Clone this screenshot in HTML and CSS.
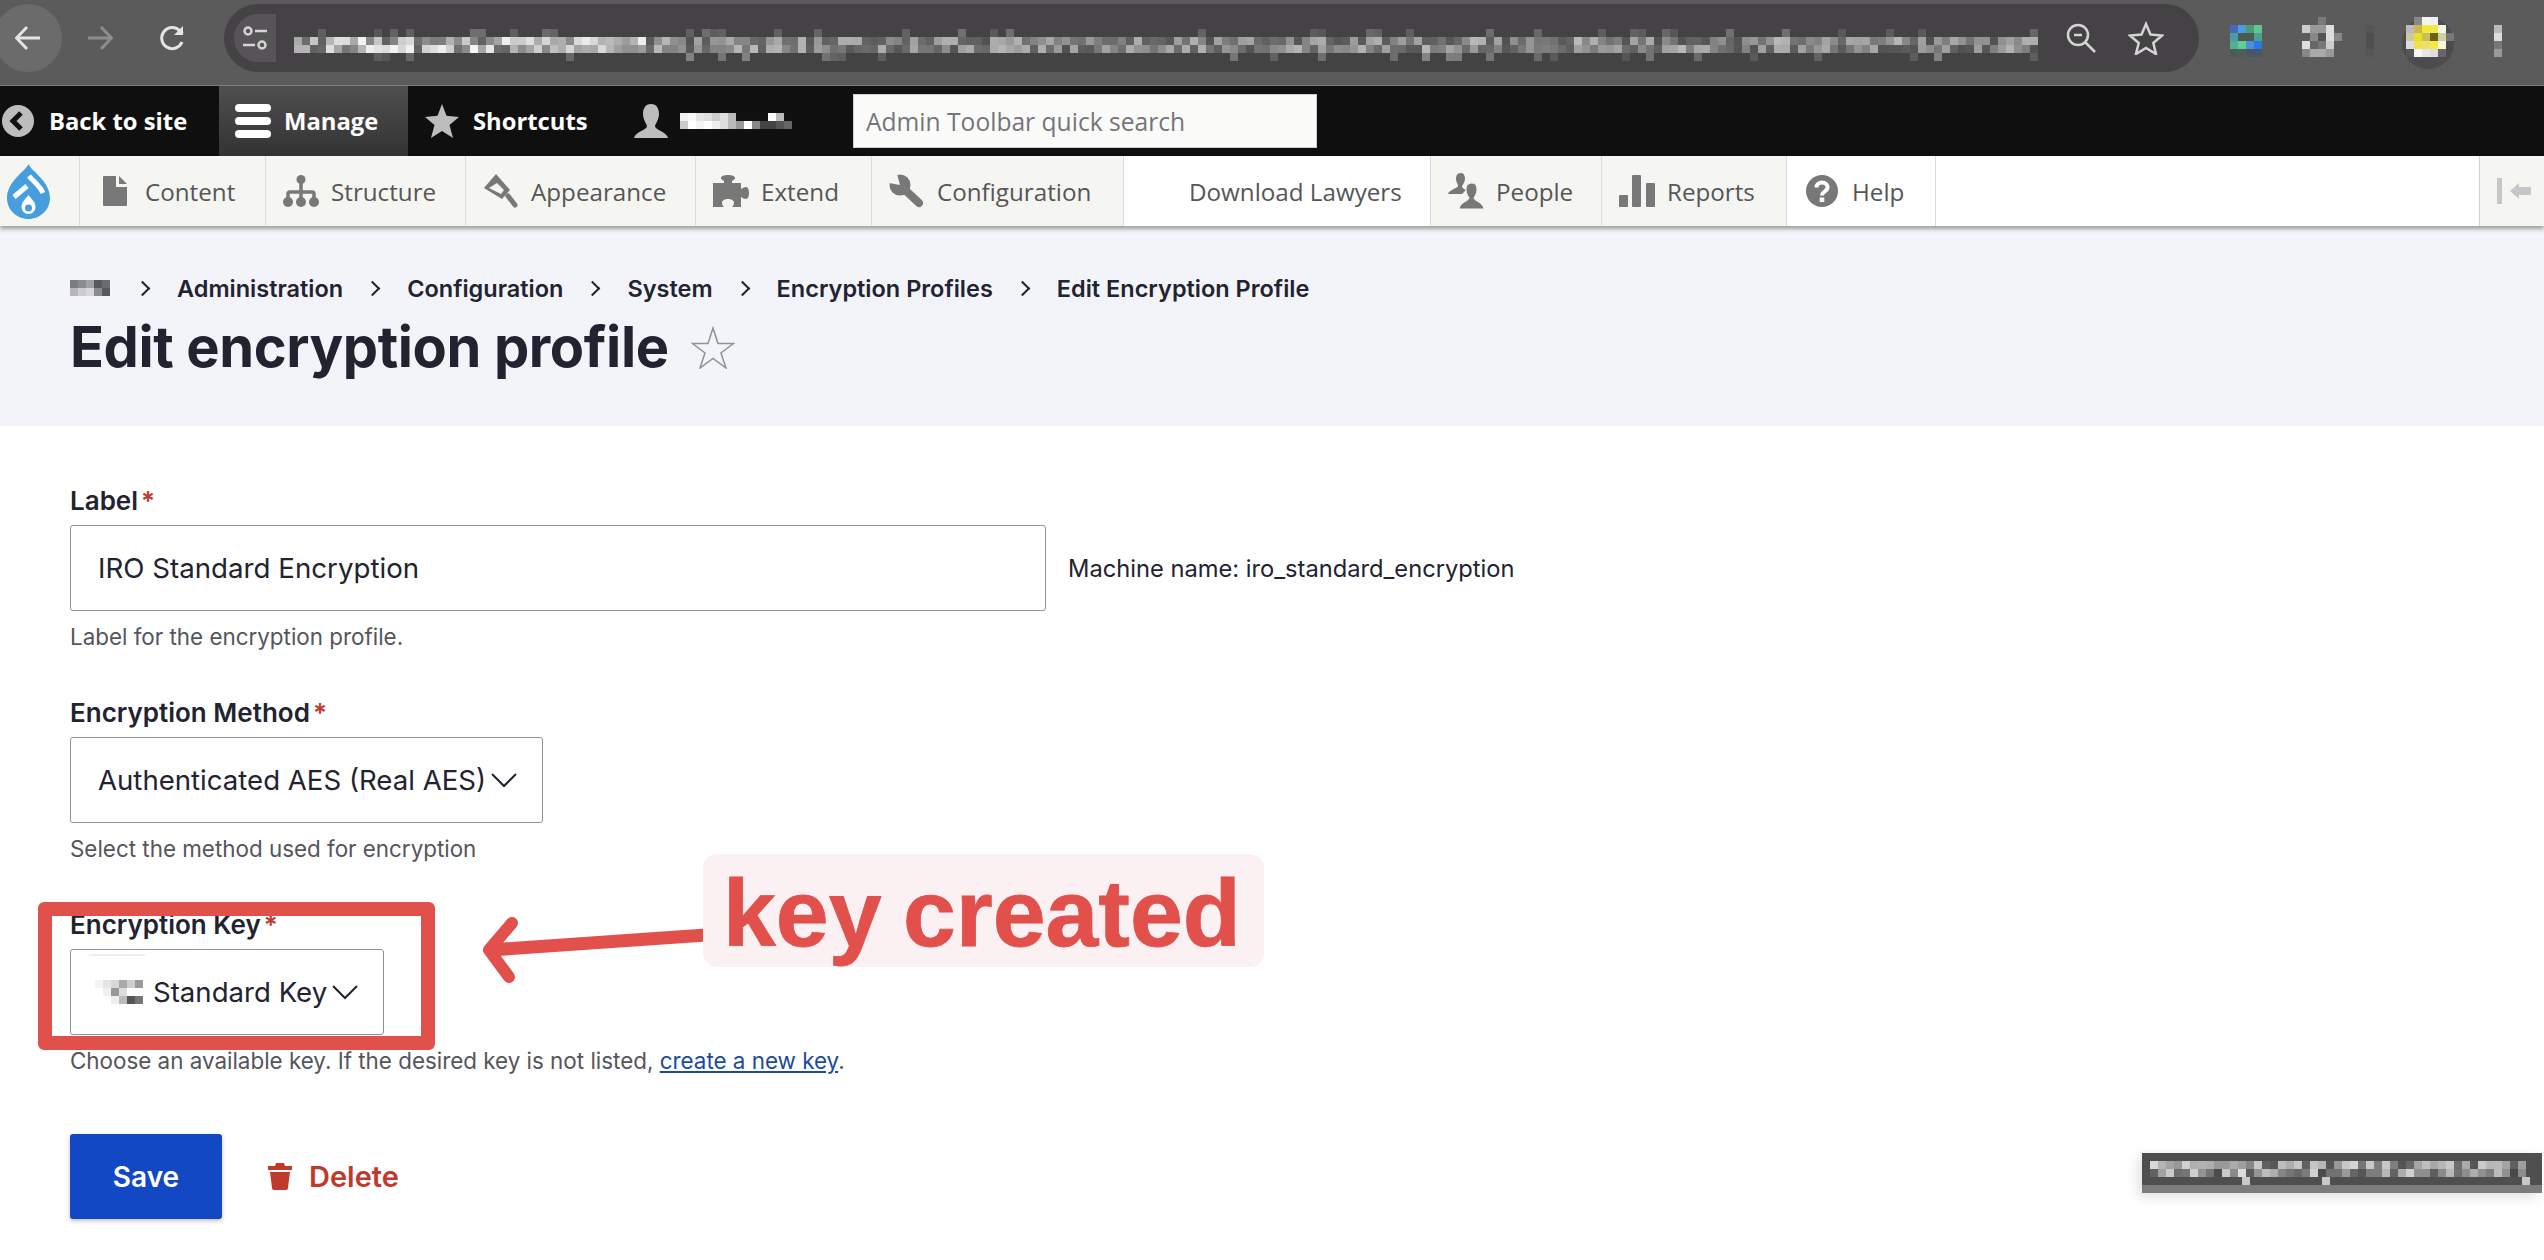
FILE: index.html
```html
<!DOCTYPE html>
<html lang="en">
<head>
  <meta charset="UTF-8" />
  <title>Edit encryption profile</title>
  <link rel="stylesheet" href="styles.css">
</head>
<body>
  <div class="browser">
    <div class="nav-btns">
      <span class="back-circle">
        <svg width="26" height="26" viewBox="0 0 26 26"><path d="M25 13H2M12 2 1.500 13 12 24" class="line"/></svg>
      </span>
      <svg class="fwd" width="26" height="26" viewBox="0 0 26 26"><path d="M1 13h23M14 2l10.500 11L14 24" class="line dim"/></svg>
      <svg class="reload" width="26" height="28" viewBox="0 0 26 28"><path d="M23 18a10.500 10.500 0 1 1-2-11l2.500 3" class="line"/><path d="M24 2v9h-9z" class="solid"/></svg>
    </div>
    <div class="omnibox">
      <span class="site-chip">
        <svg width="26" height="26" viewBox="0 0 26 26"><circle cx="6" cy="6" r="3.500" class="line thin"/><path d="M13 6h12M1 20h12" class="line thin"/><circle cx="20" cy="20" r="3.500" class="line thin"/></svg>
      </span>
      <canvas id="urlMosaic" class="url-mosaic" width="1744" height="32"></canvas>
      <svg class="zoom-icon" width="30" height="30" viewBox="0 0 30 30"><circle cx="12" cy="12" r="10" class="line thin"/><path d="M8 12h8M19 19l10 10" class="line thin"/></svg>
      <svg class="bookmark" width="36" height="34" viewBox="0 0 36 34"><path d="M18 3l4.500 10.500 11.500 1-8.700 7.500 2.700 11-10-6-10 6 2.700-11L2 14.500l11.500-1z" class="line thin"/></svg>
    </div>
    <svg class="ext-icons" width="345" height="85" viewBox="2199 0 345 85">
      <circle cx="2428" cy="43" r="26" fill="#4d4b4d"/>
      <g id="extCells"></g>
    </svg>
  </div>

  <div class="admin-bar">
    <a class="bar-item back-site">
      <svg width="32" height="32" viewBox="0 0 32 32"><circle cx="16" cy="16" r="16" fill="#bdbdbd"/><path d="M19 8l-8 8 8 8" fill="none" stroke="#111" stroke-width="5"/></svg>
      Back to site
    </a>
    <a class="bar-item manage">
      <svg width="36" height="34" viewBox="0 0 36 34"><rect width="36" height="8" rx="4" fill="#fff"/><rect y="13" width="36" height="8" rx="4" fill="#fff"/><rect y="26" width="36" height="8" rx="4" fill="#fff"/></svg>
      Manage
    </a>
    <a class="bar-item shortcuts">
      <svg width="34" height="34" viewBox="0 0 34 34"><path d="M17 0l4.500 11.800L34 13l-9.500 8L28 34l-11-7-11 7 3.500-13L0 13l12.500-1.200z" fill="#bdbdbd"/></svg>
      Shortcuts
    </a>
    <a class="bar-item user">
      <svg width="34" height="34" viewBox="0 0 34 34"><path d="M17 0c-6 0-8 5-8 10 0 5 3 9 4 12 0 4-12 6-13 12h34c-1-6-13-8-13-12 1-3 4-7 4-12 0-5-2-10-8-10z" fill="#bdbdbd"/></svg>
      <svg width="112" height="16" viewBox="0 0 14 2" shape-rendering="crispEdges"><g id="userCells"></g></svg>
    </a>
    <input class="quick-search" type="text" placeholder="Admin Toolbar quick search" />
  </div>

  <div class="tray">
    <a class="tab logo">
      <svg width="43" height="55" viewBox="0 0 43 55">
        <path d="M21.500 0C24 7 43 17 43 34c0 12-10 21-21.500 21S0 46 0 34C0 17 19 7 21.500 0z" fill="#479ede"/>
        <path d="M7 33l13-11M22 12c4 5 10 9 14 17" fill="none" stroke="#fff" stroke-width="5"/>
        <path d="M21.500 31c3 4 7 7 7 12a7 7 0 0 1-14 0c0-5 4-8 7-12z" fill="#fff"/>
        <circle cx="21.500" cy="44" r="3.500" fill="#479ede"/>
      </svg>
    </a>
    <a class="tab">
      <span class="tab-icon"><svg width="24" height="30" viewBox="0 0 24 30"><path d="M1 0h12v11h11v18a1 1 0 0 1-1 1H1a1 1 0 0 1-1-1V1a1 1 0 0 1 1-1zM16 0l8 8h-8z"/></svg></span>
      Content
    </a>
    <a class="tab">
      <span class="tab-icon"><svg width="36" height="32" viewBox="0 0 36 32"><circle cx="18" cy="4.500" r="4.500"/><circle cx="5" cy="27" r="5"/><circle cx="18" cy="27" r="5"/><circle cx="31" cy="27" r="5"/><path d="M18 4v23M5 27v-8a2 2 0 0 1 2-2h22a2 2 0 0 1 2 2v8" fill="none" stroke="#787878" stroke-width="3.500"/></svg></span>
      Structure
    </a>
    <a class="tab">
      <span class="tab-icon"><svg width="34" height="34" viewBox="0 0 34 34"><path fill-rule="evenodd" d="M12 0L0 14l18 11 8-9zM5 14l8-5 7 7-3 4z"/><path d="M24 22l7 9" fill="none" stroke="#787878" stroke-width="5" stroke-linecap="round"/></svg></span>
      Appearance
    </a>
    <a class="tab">
      <span class="tab-icon"><svg width="36" height="32" viewBox="0 0 36 32"><path d="M0 8h11V6C9 5 8 4 8 3c0-2 3-3 7-3s7 1 7 3c0 1-1 2-3 3v2h9v6c2-1 3-2 5-2 2 0 3 3 3 6s-1 6-3 6c-2 0-3-1-5-2v10h-9c1-1 2-2 2-4 0-3-3-4-6-4s-6 1-6 4c0 2 1 3 2 4H0z"/></svg></span>
      Extend
    </a>
    <a class="tab">
      <span class="tab-icon"><svg width="36" height="34" viewBox="0 0 36 34"><circle cx="11" cy="11" r="10.500"/><path d="M14 14l16 15" fill="none" stroke="#787878" stroke-width="8" stroke-linecap="round"/><path d="M11 11L0 9V0h8z" fill="#f5f5f2"/></svg></span>
      Configuration
    </a>
    <a class="tab plain">
      <span class="tab-icon"></span>
      Download Lawyers
    </a>
    <a class="tab">
      <span class="tab-icon"><svg width="36" height="36" viewBox="0 0 36 36"><path d="M13 0C9 0 8 3 8 6c0 3 2 5 2 7 0 2-9 4-10 8h14l4-4c-2-1-4-2-4-4 1-2 3-4 3-7 0-3-1-6-4-6z"/><path d="M24 10c-5 0-6 4-6 7 0 3 2 6 3 8 0 3-9 4-10 11h25c-1-7-10-8-10-11 1-2 3-5 3-8 0-3-1-7-5-7z" stroke="#f5f5f2" stroke-width="1"/></svg></span>
      People
    </a>
    <a class="tab">
      <span class="tab-icon"><svg width="36" height="32" viewBox="0 0 36 32"><rect y="20" width="9" height="12" rx="1"/><rect x="13" width="9" height="32" rx="1"/><rect x="27" y="8" width="9" height="24" rx="1"/></svg></span>
      Reports
    </a>
    <a class="tab plain">
      <span class="tab-icon"><svg width="32" height="32" viewBox="0 0 32 32"><circle cx="16" cy="16" r="16"/><path d="M10.500 12.500c0-3 2.500-5 5.500-5s5.500 2 5.500 5c0 4-5.500 4-5.500 8" fill="none" stroke="#fff" stroke-width="4"/><rect x="13.700" y="22.500" width="4.600" height="4.600" fill="#fff"/></svg></span>
      Help
    </a>
    <span class="tray-fill"></span>
    <a class="tab collapse">
      <svg width="34" height="26" viewBox="0 0 34 26"><rect width="5" height="26" fill="#c6c6c6"/><path d="M13 13l9-8v4h12v8H22v4z" fill="#c6c6c6"/></svg>
    </a>
  </div>

  <header class="page-header">
    <ol class="crumbs">
      <li class="crumb-home"><svg width="40" height="16" viewBox="0 0 5 2" shape-rendering="crispEdges"><g id="crumbCells"></g></svg></li>
      <li>Administration</li>
      <li>Configuration</li>
      <li>System</li>
      <li>Encryption Profiles</li>
      <li>Edit Encryption Profile</li>
    </ol>
    <div class="title-row">
      <h1>Edit encryption profile</h1>
      <svg width="44" height="43" viewBox="0 0 44 43"><path d="M22 2l5 15.500h15.500L30 27l5 15-13-9.500L9 42l5-15L1.500 17.500H17z" fill="none" stroke="#8e929c" stroke-width="1.500"/></svg>
    </div>
  </header>

  <form class="edit-form">
    <div class="field">
      <label>Label<span class="req">*</span></label>
      <div class="input-row">
        <input class="text-input" type="text" value="IRO Standard Encryption" />
        <span class="machine">Machine name: iro_standard_encryption</span>
      </div>
      <p class="help">Label for the encryption profile.</p>
    </div>

    <div class="field">
      <label>Encryption Method<span class="req">*</span></label>
      <div class="select method">
        Authenticated AES (Real AES)
        <svg width="26" height="16" viewBox="0 0 26 16"><path d="M1 2l12 12L25 2" fill="none" stroke="#222330" stroke-width="2"/></svg>
      </div>
      <p class="help">Select the method used for encryption</p>
    </div>

    <div class="field">
      <label>Encryption Key<span class="req">*</span></label>
      <div class="select key">
        <svg class="key-blur" width="48" height="24" viewBox="0 0 6 3" shape-rendering="crispEdges"><g id="keyCells"></g></svg>
        Standard Key
        <svg width="26" height="16" viewBox="0 0 26 16"><path d="M1 2l12 12L25 2" fill="none" stroke="#222330" stroke-width="2"/></svg>
      </div>
      <p class="help">Choose an available key. If the desired key is not listed, <a href="#">create a new key</a>.</p>
    </div>

    <div class="actions">
      <button type="button" class="save">Save</button>
      <a class="delete">
        <svg width="26" height="27" viewBox="0 0 26 27"><path d="M9 0h8l1 3h7v4H1V3h7zM3 9h20l-2 16a2 2 0 0 1-2 2H7a2 2 0 0 1-2-2z" fill="#c1392b"/></svg>
        Delete
      </a>
    </div>
  </form>

  <!-- annotation drawn on top of the screenshot -->
  <div class="mark-box"></div>
  <svg class="mark-arrow" width="230" height="70" viewBox="0 0 230 70">
    <path d="M226 20L10 35" fill="none" stroke="#e2504c" stroke-width="13"/>
    <path d="M32 8L9 35l20 27" fill="none" stroke="#e2504c" stroke-width="12" stroke-linecap="round" stroke-linejoin="round"/>
  </svg>
  <div class="mark-note">key created</div>

  <canvas id="cornerMosaic" class="corner-mosaic" width="400" height="40"></canvas>

  <script src="mosaic.js"></script>
</body>
</html>
```

FILE: styles.css
```css
* {
  box-sizing: border-box;
}

html, body {
  height: 1260px;
  overflow: hidden;
}

body {
  position: relative;
  margin: 0;
  font-family: Inter, 'Liberation Sans', sans-serif;
  color: #222330;
  background: #ffffff;
}

/* browser chrome */
.browser {
  display: flex;
  align-items: flex-start;
  height: 86px;
  padding-top: 4px;
  background: #5b5b5b;
  border-bottom: 1px solid #7c7c7c;
}

.nav-btns {
  display: flex;
  align-items: center;
  width: 224px;
  height: 68px;
  flex: none;
}

.back-circle {
  display: flex;
  align-items: center;
  justify-content: center;
  width: 68px;
  height: 68px;
  margin-left: -6px;
  border-radius: 50%;
  background: #6b6b6b;
}

.fwd {
  margin-left: 25px;
}

.reload {
  margin-left: 46px;
}

.line {
  fill: none;
  stroke: #e4e4e4;
  stroke-width: 3;
}

.line.thin {
  stroke: #d4d4d4;
  stroke-width: 2.500;
}

.line.dim {
  stroke: #8d8d8d;
}

.solid {
  fill: #e4e4e4;
}

.omnibox {
  display: flex;
  align-items: center;
  width: 1975px;
  height: 68px;
  flex: none;
  padding-left: 10px;
  background: #444244;
  border-radius: 34px;
}

.site-chip {
  display: flex;
  align-items: center;
  justify-content: center;
  width: 42px;
  height: 48px;
  background: #565456;
  border-radius: 24px 0 0 24px;
}

.url-mosaic {
  display: block;
  margin-left: 18px;
  margin-top: 14px;
}

.zoom-icon {
  margin-left: 28px;
}

.bookmark {
  margin-left: 32px;
}

.ext-icons {
  flex: none;
  margin-top: -4px;
}

/* admin toolbar */
.admin-bar {
  display: flex;
  align-items: center;
  height: 70px;
  background: #0f0f0f;
}

.bar-item {
  display: flex;
  align-items: center;
  height: 70px;
  padding-bottom: 1px;
  color: #ffffff;
  font-family: 'Open Sans', sans-serif;
  font-size: 23.800px;
  font-weight: 700;
}

.back-site {
  gap: 15px;
  width: 219px;
  padding-left: 2px;
}

.manage {
  gap: 13px;
  width: 189px;
  padding-left: 16px;
  background: linear-gradient(#4f4f4f, #333333);
}

.shortcuts {
  gap: 14px;
  width: 226px;
  padding-left: 17px;
}

.user {
  gap: 12px;
  width: 219px;
}

.quick-search {
  width: 464px;
  height: 54px;
  margin-left: 0;
  padding: 0 12px;
  font-family: 'Open Sans', sans-serif;
  font-size: 24.600px;
  background: #fbfbf9;
  border: 1px solid #cfcfcf;
  border-radius: 0;
}

.quick-search::placeholder {
  color: #75757a;
}

.tray {
  position: relative;
  display: grid;
  grid-template-columns: 80px 186px 200px 230px 176px 252px 307px 171px 185px 149px 1fr 65px;
  height: 70px;
  background: #ffffff;
  box-shadow: 0 3px 4px rgba(0, 0, 0, 0.35);
}

.tab {
  display: flex;
  align-items: center;
  gap: 12px;
  padding-left: 17px;
  color: #565656;
  font-family: 'Open Sans', sans-serif;
  font-size: 24.200px;
  background: #f5f5f2;
  border-right: 1px solid #dcdcd8;
}

.tab.plain {
  background: #ffffff;
}

.tab.logo {
  padding-left: 7px;
}

.tab.collapse {
  justify-content: flex-start;
  padding-left: 17px;
  border-right: 0;
  border-left: 1px solid #d4d4d0;
}

.tab-icon {
  display: flex;
  justify-content: center;
  width: 36px;
  flex: none;
}

.tab-icon svg {
  fill: #787878;
}

/* page title block */
.page-header {
  height: 200px;
  padding: 48px 70px 0;
  background: #f3f4f9;
}

.crumbs {
  display: flex;
  align-items: center;
  height: 28px;
  margin: 0;
  padding: 0;
  list-style: none;
  font-size: 23.500px;
  font-weight: 600;
}

.crumbs li {
  display: flex;
  align-items: center;
}

.crumbs li + li::before {
  content: "";
  width: 9px;
  height: 9px;
  margin: 0 29px 0 24px;
  border-top: 2px solid #222330;
  border-right: 2px solid #222330;
  transform: rotate(45deg);
}

.crumb-home {
  margin-right: 3px;
}

.title-row {
  display: flex;
  align-items: center;
  gap: 22px;
  margin-top: 10px;
}

h1 {
  margin: 0;
  font-size: 56px;
  line-height: 70px;
  font-weight: 700;
  letter-spacing: -0.400px;
}

/* form */
.edit-form {
  padding: 60px 70px 0;
}

.field {
  margin-bottom: 47px;
}

.field label {
  display: block;
  font-size: 26px;
  font-weight: 600;
  line-height: 30px;
  margin-bottom: 9px;
}

.req {
  margin-left: 3px;
  color: #c0392b;
}

.input-row {
  display: flex;
  align-items: center;
  gap: 22px;
}

.text-input {
  width: 976px;
  height: 86px;
  padding: 0 27px;
  font-family: Inter, sans-serif;
  font-size: 27.700px;
  color: #222330;
  border: 1px solid #8e929c;
  border-radius: 3px;
}

.machine {
  font-size: 23.700px;
}

.help {
  margin: 12px 0 0;
  font-size: 22.400px;
  line-height: 28px;
  color: #55565b;
}

.help a {
  color: #1a4ba0;
}

.select {
  display: flex;
  align-items: center;
  height: 86px;
  padding: 0 0 0 27px;
  font-size: 27.600px;
  border: 1px solid #8e929c;
  border-radius: 3px;
  gap: 5px;
}

.select.method {
  width: 473px;
}

.select.key {
  position: relative;
  width: 314px;
  padding-left: 24px;
}

.select.key::before {
  content: "";
  position: absolute;
  top: 4px;
  left: 18px;
  width: 56px;
  height: 2px;
  background: #eeeeee;
}

.key-blur {
  margin-right: 5px;
}

.actions {
  display: flex;
  align-items: center;
  margin-top: 59px;
}

.save {
  width: 152px;
  height: 85px;
  font-family: Inter, sans-serif;
  font-size: 28px;
  font-weight: 600;
  color: #ffffff;
  background: #1248c4;
  border: none;
  border-radius: 3px;
  box-shadow: 0 2px 4px rgba(0, 0, 0, 0.25);
}

.delete {
  display: flex;
  align-items: center;
  gap: 16px;
  margin-left: 45px;
  font-size: 29px;
  font-weight: 600;
  color: #c1392b;
}

/* things lying over the page */
.mark-box {
  position: absolute;
  left: 38px;
  top: 902px;
  width: 397px;
  height: 148px;
  border: 14px solid #e2504c;
  border-radius: 6px;
}

.mark-arrow {
  position: absolute;
  left: 480px;
  top: 915px;
}

.mark-note {
  position: absolute;
  left: 703px;
  top: 854px;
  width: 561px;
  height: 113px;
  padding-left: 20px;
  font-family: 'Liberation Sans', Arial, sans-serif;
  font-size: 95px;
  font-weight: 700;
  line-height: 118px;
  word-spacing: -5px;
  color: #e2504c;
  background: #fbf0f2;
  border-radius: 14px;
  -webkit-text-stroke: 0.800px #e2504c;
}

.corner-mosaic {
  position: absolute;
  left: 2142px;
  top: 1153px;
  box-shadow: -4px 4px 12px rgba(0, 0, 0, 0.12);
}
```

FILE: mosaic.js
```js
// draws the pixelated bits of the screenshot
let seed = 71;

function rnd() {
  seed = (seed * 1103515 + 12345) % 2147483;
  return seed / 2147483;
}

function grey(v) {
  const n = Math.round(v);
  return `rgb(${n},${n},${n})`;
}

function drawUrl() {
  const ctx = document.getElementById("urlMosaic").getContext("2d");
  const cols = 218;

  for (let i = 0; i < cols; i++) {
    const x = i * 8;
    const bright = i < 44 ? 95 : 80;
    const range = i < 44 ? 150 : 105;
    ctx.fillStyle = grey(bright + rnd() * range);
    ctx.fillRect(x, 8, 8, 8);
    ctx.fillStyle = grey(bright + rnd() * range);
    ctx.fillRect(x, 16, 8, 8);
    if (rnd() > 0.82) {
      ctx.fillStyle = grey(85 + rnd() * 30);
      ctx.fillRect(x, 0, 8, 8);
    }
    if (rnd() > 0.87) {
      ctx.fillStyle = grey(85 + rnd() * 50);
      ctx.fillRect(x, 24, 8, 8);
    }
  }
}

function drawCorner() {
  const ctx = document.getElementById("cornerMosaic").getContext("2d");

  ctx.fillStyle = "#4f4f4f";
  ctx.fillRect(0, 0, 400, 40);
  ctx.fillStyle = "#7c7c7c";
  ctx.fillRect(0, 32, 400, 8);

  for (let i = 1; i < 48; i++) {
    ctx.fillStyle = grey(85 + rnd() * 140);
    ctx.fillRect(i * 8, 8, 8, 8);
    ctx.fillStyle = grey(70 + rnd() * 150);
    ctx.fillRect(i * 8, 16, 8, 8);
  }
  [12, 22, 47].forEach(i => {
    ctx.fillStyle = "#c8c8c8";
    ctx.fillRect(i * 8 + 4, 24, 8, 8);
  });
}

// [x, y, colour] in the units of the svg they go in
function fillCells(id, size, cells) {
  const group = document.getElementById(id);
  const ns = "http://www.w3.org/2000/svg";

  cells.forEach(([x, y, colour]) => {
    const r = document.createElementNS(ns, "rect");
    r.setAttribute("x", x);
    r.setAttribute("y", y);
    r.setAttribute("width", size);
    r.setAttribute("height", size);
    r.setAttribute("fill", colour);
    group.appendChild(r);
  });
}

function row(y, x0, colours, step = 1) {
  return colours.map((c, i) => [x0 + i * step, y, c]);
}

drawUrl();
drawCorner();

fillCells("extCells", 8, [
  ...row(25, 2230, ["#4a68b8", "#4a9ee0", "#4f9a70", "#5fc890"], 8),
  ...row(33, 2230, ["#4a9aa8", "#4a5a55", "#4a5a55", "#4fa090"], 8),
  ...row(41, 2230, ["#50b090", "#60d090", "#4a8fe0", "#2a78e8"], 8),
  ...row(49, 2230, ["#4c5c54", "#4f5f55", "#4f5560", "#4a5668"], 8),
  [2318, 17, "#7a7a7a"],
  ...row(25, 2302, ["#cccccc", "#999999", "#999999", "#dddddd"], 8),
  ...row(33, 2310, ["#888888", "#555555", "#dddddd", "#888888"], 8),
  ...row(41, 2302, ["#dddddd", "#666666", "#777777", "#cccccc"], 8),
  ...row(49, 2302, ["#888888", "#aaaaaa", "#aaaaaa", "#999999"], 8),
  [2366, 25, "#555555"], [2366, 33, "#4f4f4f"], [2366, 41, "#4f4f4f"], [2366, 49, "#565656"],
  ...row(17, 2414, ["#888888", "#f4f4f4", "#f0f0f0"], 8),
  ...row(25, 2406, ["#bbbbbb", "#c8b850", "#f5e63a", "#f0e850", "#f5f5e5"], 8),
  ...row(33, 2406, ["#ccc9a0", "#e8de30", "#c8c050", "#6a6410", "#d0d0a0", "#777777"], 8),
  ...row(41, 2406, ["#dddddd", "#f0e050", "#f0dc70", "#f5e840", "#f5f5e0"], 8),
  ...row(49, 2406, ["#555555", "#f5f5f5", "#e5e5e5", "#dddddd", "#666666"], 8),
  [2494, 25, "#bbbbbb"], [2494, 33, "#dddddd"], [2494, 41, "#777777"], [2494, 49, "#999999"]
]);

fillCells("userCells", 1, [
  ...row(0, 0, ["#f0f0f0", "#f8f8f8", "#e4e4e4", "#dddddd", "#cccccc", "#dddddd", "#bbbbbb", "#111111", "#111111", "#111111", "#111111", "#ffffff", "#bbbbbb", "#111111"]),
  ...row(1, 0, ["#cccccc", "#ffffff", "#f4f4f4", "#ffffff", "#eeeeee", "#dddddd", "#bbbbbb", "#999999", "#ffffff", "#888888", "#444444", "#444444", "#555555", "#666666"])
]);

fillCells("crumbCells", 1, [
  ...row(0, 0, ["#7b7b82", "#8b8b92", "#a0a0a6", "#58585f", "#6a6a70"]),
  ...row(1, 0, ["#b5b5ba", "#cdcdd2", "#d8d8dc", "#8a8a90", "#58585f"])
]);

fillCells("keyCells", 1, [
  ...row(0, 0, ["#f4f4f4", "#e4e4e4", "#d8d8d8", "#aaaaaa", "#cfcfcf", "#999999"]),
  ...row(1, 0, ["#ffffff", "#f0f0f0", "#999999", "#dddddd", "#ffffff", "#ffffff"]),
  ...row(2, 0, ["#ffffff", "#ffffff", "#eeeeee", "#bbbbbb", "#555555", "#777777"])
]);
```
